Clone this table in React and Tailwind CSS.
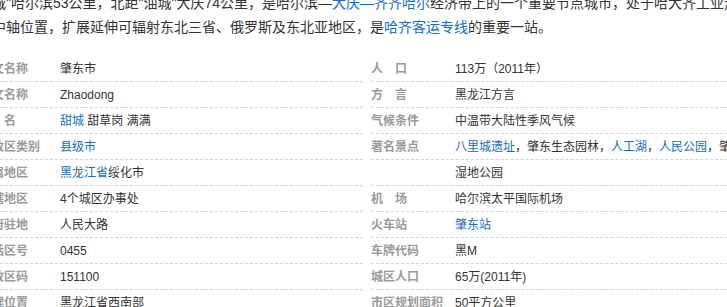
import React from "react";

const link = "text-[#136ec2]";

const leftRows = [
  { label: "中文名称", value: "肇东市" },
  { label: "外文名称", value: "Zhaodong" },
  { label: "别　名", value: <><span className={link}>甜城</span> 甜草岗 满满</> },
  { label: "行政区类别", value: <span className={link}>县级市</span> },
  { label: "所属地区", value: <><span className={link}>黑龙江省</span>绥化市</> },
  { label: "下辖地区", value: "4个城区办事处" },
  { label: "政府驻地", value: "人民大路" },
  { label: "电话区号", value: "0455" },
  { label: "邮政区码", value: "151100" },
  { label: "地理位置", value: "黑龙江省西南部" },
];

const rightRows = [
  { label: "人　口", value: "113万（2011年）" },
  { label: "方　言", value: "黑龙江方言" },
  { label: "气候条件", value: "中温带大陆性季风气候" },
  {
    label: "著名景点",
    value: (
      <>
        <span className={link}>八里城遗址</span>，肇东生态园林，<span className={link}>人工湖</span>，
        <span className={link}>人民公园</span>，肇东
      </>
    ),
  },
  { label: "", value: "湿地公园" },
  { label: "机　场", value: "哈尔滨太平国际机场" },
  { label: "火车站", value: <span className={link}>肇东站</span> },
  { label: "车牌代码", value: "黑M" },
  { label: "城区人口", value: "65万(2011年)" },
  { label: "市区规划面积", value: "50平方公里" },
];

const Row = ({ label, value, labelWidth }) => (
  <div className="flex items-center h-[26px] border-b border-dashed border-[#d4d4d4] whitespace-nowrap">
    <div className={`${labelWidth} shrink-0 font-bold text-[#9a9a9a]`}>{label}</div>
    <div className="text-[#333]">{value}</div>
  </div>
);

export default function App() {
  return (
    <div
      className="w-[727px] h-[307px] overflow-hidden bg-white"
      style={{ fontFamily: '"Liberation Sans", "Noto Sans CJK SC", sans-serif' }}
    >
      <div className="ml-[-20px] w-[1000px]">
        <div className="mt-[-9px] pl-[12px] text-[14px] leading-[24px] text-[#333] whitespace-nowrap">
          <div>
            城"哈尔滨53公里，北距"油城"大庆74公里，是哈尔滨—<span className={link}>大庆—齐齐哈尔</span>经济带上的一个重要节点城市，处于哈大齐工业走廊
          </div>
          <div>
            中轴位置，扩展延伸可辐射东北三省、俄罗斯及东北亚地区，是<span className={link}>哈齐客运专线</span>的重要一站。
          </div>
        </div>

        <div className="mt-[17px] flex text-[12px]">
          <div className="w-[383px] shrink-0">
            {leftRows.map((r, i) => (
              <Row key={i} label={r.label} value={r.value} labelWidth="w-[80px]" />
            ))}
          </div>
          <div className="w-[420px] shrink-0 pl-[8px]">
            {rightRows.map((r, i) => (
              <Row key={i} label={r.label} value={r.value} labelWidth="w-[84px]" />
            ))}
          </div>
        </div>
      </div>
    </div>
  );
}
